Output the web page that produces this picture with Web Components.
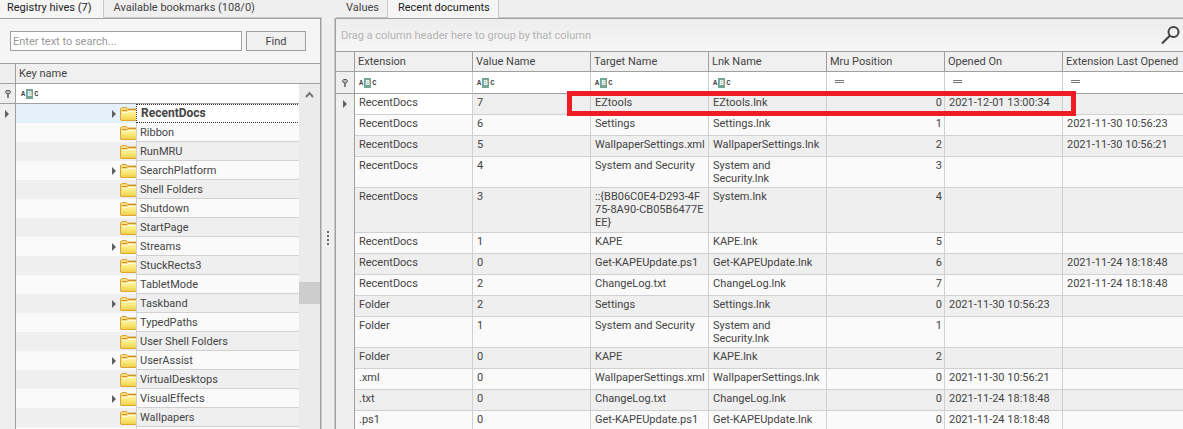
<!DOCTYPE html>
<html lang="en">
<head>
<meta charset="utf-8">
<title>Registry Explorer</title>
<style>
html, body { height: 100%; }
body {
  margin: 0;
  overflow: hidden;
  background: #efefef;
  color: #444;
  font: 11px/13px Roboto, "Liberation Sans", sans-serif;
  --line: #a0a0a0;
  --soft: #c8c8c8;
  --odd: #fafafa;
  --even: #efefef;
}
</style>
</head>
<body>
<registry-app></registry-app>
<script>
function define(name, html, setup) {
  const template = document.createElement('template');
  template.innerHTML = html;
  customElements.define(name, class extends HTMLElement {
    connectedCallback() {
      if (this.shadowRoot) return;
      this.attachShadow({ mode: 'open' }).append(template.content.cloneNode(true));
      if (setup) setup(this, this.shadowRoot);
    }
  });
}

define('abc-icon', `
<style>
:host { display: inline-flex; align-items: center; height: 10px; font: bold 7px/10px "Liberation Mono", monospace; color: #444; }
b { margin: 0 1px; width: 7px; height: 10px; background: #73a592; color: #fff; text-align: center; }
</style>A<b>B</b>C`);

define('equals-icon', `
<style>:host { display: block; width: 9px; height: 1px; border: solid #777; border-width: 1px 0; margin: 0 0 2px 4px; }</style>`);

define('pin-icon', `
<style>:host, svg { display: block; width: 6px; height: 8px; margin: 0 auto; }</style>
<svg viewBox="0 0 6 8" aria-hidden="true"><path d="M1.5 .5h3l.8 1v1.3L3.8 4H2.2L.7 2.800V1.500z" fill="#bbb" stroke="#555"/><path d="M3 4v4" stroke="#555" stroke-width="1.400"/></svg>`);

define('row-arrow', `
<style>:host, svg { display: block; width: 4px; height: 8px; }</style>
<svg viewBox="0 0 4 8" aria-hidden="true"><path d="M0 0l4 4-4 4z" fill="#606060"/></svg>`);

define('folder-icon', `
<style>:host, svg { display: block; width: 16px; height: 14px; }</style>
<svg viewBox="0 0 16 14" aria-hidden="true">
  <defs><linearGradient id="g" x2="0" y2="1"><stop stop-color="#fdf3a8"/><stop offset=".5" stop-color="#fae878"/><stop offset="1" stop-color="#f0d04c"/></linearGradient></defs>
  <path d="M.5 13V1.500h1L2 .5h4.500l1 1.500H16V13z" fill="#f8df80" stroke="#dca43a"/>
  <path d="M2 3.500h5l1-1h8" fill="none" stroke="#cf9030"/>
  <path d="M2 13V5h5l1-1h8v9z" fill="url(#g)"/>
  <path d="M2 5.500h5l1-1h8" fill="none" stroke="#fffbd8"/>
  <path d="M1 13.500h15" stroke="#dfa630"/>
</svg>`);

define('tab-strip', `
<style>
:host { display: flex; height: 18px; --tab-end: 8px; }
::slotted(button) {
  box-sizing: border-box; margin: 0; padding: 0 var(--tab-end) 2px 10px; border: 0 solid var(--soft);
  border-right-width: 1px; border-bottom-width: 1px; background: #efefef; color: inherit; font: inherit; white-space: nowrap;
}
::slotted(button[aria-selected=true]) { background: #f5f5f5; border-bottom-color: #f5f5f5; color: #222; }
::slotted(button:last-of-type:not([aria-selected=true])) { border-right-width: 0; }
i { flex: 1; border-bottom: 1px solid var(--soft); }
</style><slot></slot><i></i>`);

define('search-bar', `
<style>
:host { display: flex; gap: 4px; padding: 12px 14px 12px 10px; background: #f5f5f5; }
input, button { box-sizing: border-box; height: 20px; margin: 0; border: 1px solid var(--line); border-radius: 0; font: inherit; color: inherit; }
input { flex: 1; min-width: 0; padding: 0 2px; background: #fff; }
input::placeholder { color: #999; opacity: 1; }
button { width: 60px; padding: 0; background: #f0f0f0; }
</style><input type="text" aria-label="Search text" placeholder="Enter text to search..."><button type="button">Find</button>`);

define('key-tree', `
<style>
:host { display: block; position: relative; flex: 1; min-height: 0; overflow: hidden; background: #efefef; }
table { width: 100%; border-collapse: separate; border-spacing: 0; table-layout: fixed; }
th, td { box-sizing: border-box; padding: 0; text-align: left; font-weight: normal; white-space: nowrap; }
.g { width: 16px; border-right: 1px solid var(--line); background: #efefef; }
.g row-arrow { margin-left: 5px; }
.i { width: 120px; }
thead th { height: 21px; border: solid var(--line); border-width: 1px 0; padding-left: 3px; background: #f0f0f0; }
thead th.g { border-right-width: 1px; padding: 0; }
.f td { height: 20px; border-bottom: 1px solid var(--line); background: #fff; padding-left: 5px; }
.f td.g { background: #efefef; padding: 0; }
.f abc-icon { display: flex; }
tbody.k tr { height: 19px; background: var(--odd); }
tbody.k tr:nth-child(odd) { background: var(--even); }
.i div { display: flex; justify-content: flex-end; align-items: center; gap: 4px; height: 17px; padding-top: 1px; }
.n { border-left: 1px solid #d0d0d0; border-bottom: 1px solid #d0d0d0; padding-left: 3px; }
tbody.k tr.cur .i { background: #e4f1f9; }
tbody.k tr.cur .n { border: 1px dotted #333; background: #fff; font-weight: bold; font-size: 12px; padding-left: 4px; }
nav { position: absolute; top: 21px; right: 0; bottom: 0; width: 21px; background: #ebebeb; display: flex; flex-direction: column; }
nav button { width: 21px; height: 20px; padding: 0; border: 0; background: none; }
nav svg { display: block; margin: 0 auto; }
nav span { flex: 178 0 0; }
nav i { flex: 22 0 0; background: #cdcdcd; }
nav span + i + span { flex-grow: 125; }
</style>
<table>
<colgroup><col style="width:16px"><col style="width:120px"><col></colgroup>
<thead><tr><th class="g"></th><th colspan="2" scope="col">Key name</th></tr></thead>
<tbody class="f"><tr><td class="g"><pin-icon></pin-icon></td><td colspan="2"><abc-icon></abc-icon></td></tr></tbody>
<tbody class="k"></tbody>
</table>
<nav aria-label="Scroll keys"><button type="button" aria-label="Scroll up"><svg width="9" height="7" viewBox="0 0 9 7"><path d="M1 6l3.500-4L8 6" fill="none" stroke="#777" stroke-width="2"/></svg></button><span></span><i></i><span></span></nav>`,
(host, root) => {
  const keys = ['+RecentDocs', 'Ribbon', 'RunMRU', '+SearchPlatform', 'Shell Folders', 'Shutdown', 'StartPage', '+Streams',
    'StuckRects3', 'TabletMode', '+Taskband', 'TypedPaths', 'User Shell Folders', '+UserAssist', 'VirtualDesktops', '+VisualEffects', 'Wallpapers', ''];
  root.querySelector('.k').innerHTML = keys.map((key, n) => {
    const open = key[0] === '+', label = open ? key.slice(1) : key;
    return `<tr class="${n ? '' : 'cur'}"><td class="g">${n ? '' : '<row-arrow></row-arrow>'}</td><td class="i"><div>${open ? '<row-arrow></row-arrow>' : ''}${label ? '<folder-icon></folder-icon>' : ''}</div></td><td class="n">${label}</td></tr>`;
  }).join('');
});

define('group-bar', `
<style>
:host { display: flex; justify-content: space-between; align-items: center; height: 32px; padding: 0 2px 0 5px; color: #b4b4b4; background: linear-gradient(#ededed, #f6f6f6); }
button { padding: 0; border: 0; background: none; }
svg { display: block; }
</style><span>Drag a column header here to group by that column</span>
<button type="button" aria-label="Find"><svg width="20" height="20" viewBox="0 0 20 20" fill="none" stroke="#444" stroke-width="2"><circle cx="12.500" cy="7" r="5"/><path d="M9 10.500L1 18.500" stroke-width="2.200"/></svg></button>`);

define('documents-grid', `
<style>
:host { display: block; position: relative; flex: 1; min-height: 0; overflow: hidden; }
table { width: 100%; border-collapse: separate; border-spacing: 0; table-layout: fixed; }
col { width: 118px; }
col:first-child { width: 19px; }
col:last-child { width: auto; }
th, td { box-sizing: border-box; text-align: left; vertical-align: top; font-weight: normal; overflow: hidden; }
th { height: 21px; padding: 3px 0 0 3px; border: solid var(--line); border-width: 1px 1px 1px 0; background: #f0f0f0; white-space: nowrap; }
td { padding: 2px 2px 0 4px; border: solid #d0d0d0; border-width: 0 1px 1px 0; }
th:last-child, td:last-child { border-right-width: 0; }
tbody.d tr { height: 21px; background: var(--odd); }
tbody.d tr:nth-child(odd) { background: var(--even); }
tbody.d tr.l2 { height: 31px; }
tbody.d tr.l3 { height: 45px; }
.g, tbody.d .g { padding: 0; border-right: 1px solid var(--line); background: #efefef; }
tbody.d .g { border-bottom: 0; }
.g row-arrow { margin: 6px auto 0; }
.f td { height: 22px; vertical-align: middle; border-bottom-color: var(--line); background: #fff; padding: 0 0 0 4px; }
.f td.g { background: #efefef; padding: 0; }
.f abc-icon { display: flex; }
tbody.d tr:first-child .g + td { background: #fff; }
.num { text-align: right; }
mark { position: absolute; box-sizing: border-box; top: 40px; left: 231px; width: 509px; height: 25px; border: 5px solid #ee1c24; background: none; pointer-events: none; }
</style>
<table>
<colgroup><col><col><col><col><col><col><col><col></colgroup>
<thead><tr><th class="g"></th></tr></thead>
<tbody class="f"><tr><td class="g"><pin-icon></pin-icon></td></tr></tbody>
<tbody class="d"></tbody>
</table><mark></mark>`,
(host, root) => {
  const columns = ['Extension', 'Value Name', 'Target Name', 'Lnk Name', 'Mru Position', 'Opened On', 'Extension Last Opened'];
  const rows = [
    ['RecentDocs', 7, 'EZtools', 'EZtools.lnk', 0, '2021-12-01 13:00:34', ''],
    ['RecentDocs', 6, 'Settings', 'Settings.lnk', 1, '', '2021-11-30 10:56:23'],
    ['RecentDocs', 5, 'WallpaperSettings.xml', 'WallpaperSettings.lnk', 2, '', '2021-11-30 10:56:21'],
    ['RecentDocs', 4, 'System and Security', 'System and Security.lnk', 3, '', ''],
    ['RecentDocs', 3, '::{BB06C0E4-D293-4F<br>75-8A90-CB05B6477E<br>EE}', 'System.lnk', 4, '', ''],
    ['RecentDocs', 1, 'KAPE', 'KAPE.lnk', 5, '', ''],
    ['RecentDocs', 0, 'Get-KAPEUpdate.ps1', 'Get-KAPEUpdate.lnk', 6, '', '2021-11-24 18:18:48'],
    ['RecentDocs', 2, 'ChangeLog.txt', 'ChangeLog.lnk', 7, '', '2021-11-24 18:18:48'],
    ['Folder', 2, 'Settings', 'Settings.lnk', 0, '2021-11-30 10:56:23', ''],
    ['Folder', 1, 'System and Security', 'System and Security.lnk', 1, '', ''],
    ['Folder', 0, 'KAPE', 'KAPE.lnk', 2, '', ''],
    ['.xml', 0, 'WallpaperSettings.xml', 'WallpaperSettings.lnk', 0, '2021-11-30 10:56:21', ''],
    ['.txt', 0, 'ChangeLog.txt', 'ChangeLog.lnk', 0, '2021-11-24 18:18:48', ''],
    ['.ps1', 0, 'Get-KAPEUpdate.ps1', 'Get-KAPEUpdate.lnk', 0, '2021-11-24 18:18:48', '']
  ];
  root.querySelector('thead tr').insertAdjacentHTML('beforeend', columns.map(c => `<th scope="col">${c}</th>`).join(''));
  root.querySelector('.f tr').insertAdjacentHTML('beforeend', columns.map((c, n) => `<td>${n < 4 ? '<abc-icon></abc-icon>' : '<equals-icon></equals-icon>'}</td>`).join(''));
  root.querySelector('.d').innerHTML = rows.map((r, n) => {
    const size = r[2].includes('<br>') ? 'l3' : r[3].includes(' ') ? 'l2' : '';
    return `<tr class="${size}"><td class="g">${n ? '' : '<row-arrow></row-arrow>'}</td>${r.map((v, i) => `<td${i === 4 ? ' class="num"' : ''}>${v}</td>`).join('')}</tr>`;
  }).join('');
});

define('registry-app', `
<style>
:host { display: flex; height: 100vh; overflow: hidden; }
section { display: flex; flex-direction: column; min-width: 0; }
.left { width: 322px; flex: none; }
.right { flex: 1; }
.body { display: flex; flex-direction: column; flex: 1; min-height: 0; border-top: 1px solid var(--line); }
.left .body { border-right: 1px solid var(--line); box-shadow: 1px 0 var(--soft); margin-right: 1px; }
.right .body { border-left: 1px solid var(--line); box-shadow: -1px 0 var(--soft); margin-left: 1px; }
.split { width: 12px; flex: none; display: flex; flex-direction: column; justify-content: center; align-items: center; gap: 2px; padding-top: 46px; box-sizing: border-box; }
.split i { width: 2px; height: 2px; background: #666; }
.left tab-strip { margin-left: -3px; --tab-end: 11px; }
.right tab-strip { margin-left: 2px; }
</style>
<section class="left">
  <tab-strip role="tablist"><button type="button" role="tab" aria-selected="true">Registry hives (7)</button><button type="button" role="tab" aria-selected="false">Available bookmarks (108/0)</button></tab-strip>
  <div class="body"><search-bar></search-bar><key-tree></key-tree></div>
</section>
<div class="split"><i></i><i></i><i></i><i></i></div>
<section class="right">
  <tab-strip role="tablist"><button type="button" role="tab" aria-selected="false">Values</button><button type="button" role="tab" aria-selected="true">Recent documents</button></tab-strip>
  <div class="body"><group-bar></group-bar><documents-grid></documents-grid></div>
</section>`);
</script>
</body>
</html>
